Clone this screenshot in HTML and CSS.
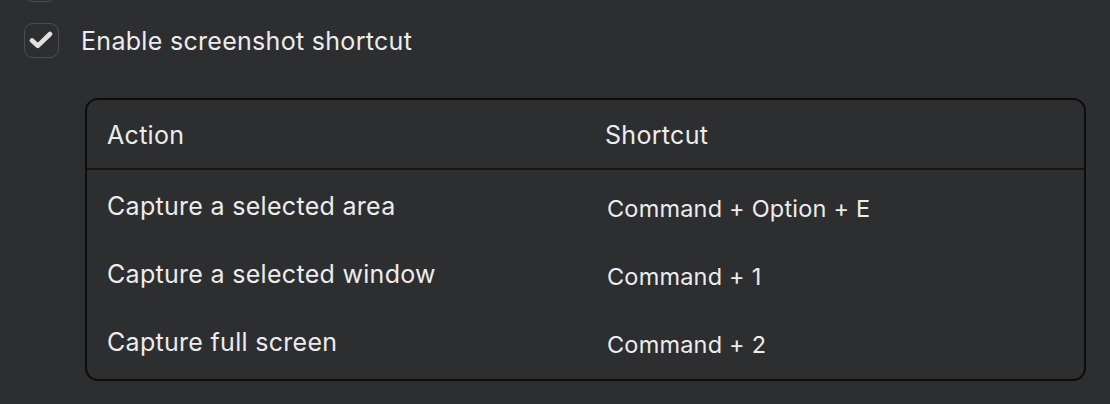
FILE: index.html
```html
<!DOCTYPE html>
<html lang="en">
<head>
<meta charset="utf-8">
<title>Screenshot shortcut</title>
<link rel="stylesheet" href="styles.css">
</head>
<body>
<div class="page">
  <div class="prev-check"></div>
  <label class="option">
    <span class="checkbox">
      <svg viewBox="0 0 24 18" width="24" height="18" aria-hidden="true">
        <path d="M3 9.5 L8.8 14.8 L21 3" fill="none" stroke="#e0e0e0" stroke-width="4.6" stroke-linecap="round" stroke-linejoin="round"/>
      </svg>
    </span>
    <span class="option-label">Enable screenshot shortcut</span>
  </label>

  <div class="table">
    <div class="row head">
      <div class="cell">Action</div>
      <div class="cell">Shortcut</div>
    </div>
    <div class="body">
      <div class="row">
        <div class="cell">Capture a selected area</div>
        <div class="cell key">Command + Option + E</div>
      </div>
      <div class="row">
        <div class="cell">Capture a selected window</div>
        <div class="cell key">Command + 1</div>
      </div>
      <div class="row">
        <div class="cell">Capture full screen</div>
        <div class="cell key">Command + 2</div>
      </div>
    </div>
  </div>
</div>
</body>
</html>
```

FILE: styles.css
```css
html, body {
  margin: 0;
  padding: 0;
  background: #2d2e30;
}
body {
  font-family: Inter, "Noto Sans", "Liberation Sans", sans-serif;
  color: #ececec;
  width: 1110px;
  height: 404px;
  overflow: hidden;
}
.page {
  position: relative;
  padding: 23px 0 0 24px;
}
.prev-check {
  position: absolute;
  left: 24px;
  top: -31px;
  width: 31px;
  height: 31px;
  border: 1.5px solid #4c4d51;
  border-radius: 9px;
}
.option {
  display: flex;
  align-items: center;
  height: 34px;
}
.checkbox {
  box-sizing: border-box;
  width: 35px;
  height: 35px;
  border: 1.5px solid #4c4d51;
  border-radius: 9px;
  display: flex;
  align-items: center;
  justify-content: center;
}
.checkbox svg {
  display: block;
  margin-left: -1px;
}
.option-label {
  margin-left: 22px;
  font-size: 25px;
  letter-spacing: 0.3px;
  padding-top: 2px;
}
.table {
  box-sizing: border-box;
  margin: 41px 0 0 61px;
  width: 1001px;
  height: 283px;
  border: 2px solid #0d0d0e;
  border-radius: 13px;
}
.row {
  display: grid;
  grid-template-columns: 498px 1fr;
  align-items: center;
  height: 68px;
}
.head {
  height: 68px;
  border-bottom: 2px solid #161617;
}
.head .cell {
  padding-top: 2px;
}
.body {
  padding-top: 2px;
}
.cell {
  padding-left: 20px;
  font-size: 25px;
  letter-spacing: 0.3px;
}
.key {
  font-size: 23.5px;
  letter-spacing: 0.2px;
  padding-top: 5px;
  padding-left: 22px;
}
```
